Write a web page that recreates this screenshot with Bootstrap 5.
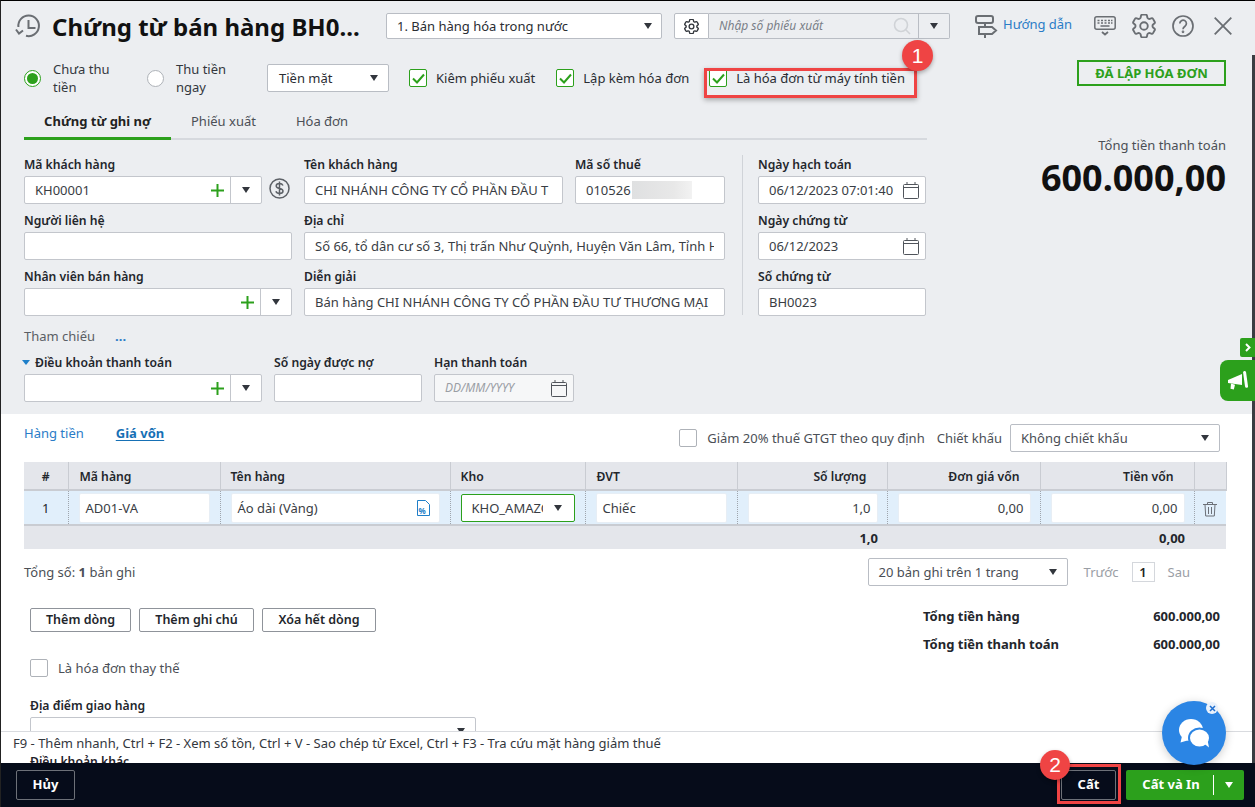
<!DOCTYPE html>
<html lang="vi">
<head>
<meta charset="utf-8">
<title>Chứng từ bán hàng</title>
<link href="https://cdn.jsdelivr.net/npm/bootstrap@5.3.0/dist/css/bootstrap.min.css" rel="stylesheet">
<style>
html,body{margin:0;height:100%;overflow:hidden;background:#fff}
body{font-family:"Noto Sans","Liberation Sans",sans-serif;font-size:13px;color:#1f2229;line-height:18px}
.shell{width:1255px;height:807px;position:relative;overflow:hidden;border-top:1px solid #000;border-left:1px solid #222;display:flex;flex-direction:column}
.scrollstrip{position:absolute;right:0;top:54px;bottom:44px;width:3px;background:#3a3d42}
.scrolltop{position:absolute;right:0;top:0;height:54px;width:3px;background:#eceef1}
.scrollarea{flex:1 1 auto;min-height:0;overflow:hidden;position:relative}
.graypane{background:#eceef1;height:413px;padding:0 0 0 23px}
.headrow{height:50px;display:flex;align-items:center;margin-left:-9px}
.doc-title{font-size:24px;font-weight:700;color:#111;line-height:30px;margin:2px 0 0 11px;width:334px;white-space:nowrap}
.boxsel{background:#fff;border:1px solid #b9bdc4;border-radius:2px;height:26px;display:flex;align-items:center;padding:0 10px;white-space:nowrap;color:#2a2d33}
.caretdown{width:0;height:0;border-left:4.5px solid transparent;border-right:4.5px solid transparent;border-top:6px solid #32363d;flex:none;display:inline-block}
.wtype{width:276px;justify-content:space-between;padding-right:9px;margin-left:0}
.gearbtn{width:35px;margin-left:12px;border-radius:2px 0 0 2px;justify-content:center;padding:0}
.searchbox{width:241px;background:#eceef1;border-left:0;border-radius:0 2px 2px 0;padding:0;color:#7a7f88;font-style:italic;font-size:12px}
.searchbox .stext{flex:1;padding-left:10px}
.searchbox .sdrop{width:31px;height:100%;border-left:1px solid #b9bdc4;display:flex;align-items:center;justify-content:center;font-style:normal}
.guide{color:#2a7cc7;margin-left:25px;margin-right:22px;display:flex;align-items:center;gap:3px;white-space:nowrap}
.guide span{margin-top:-5px}
.ticons{display:flex;align-items:center;gap:16px}
.mainsplit{display:flex}
.leftcol{width:903px}
.rightcol{flex:1;padding-right:29px;display:flex;flex-direction:column;align-items:flex-end}
.optrow{height:46px;margin-top:4px;display:flex;align-items:center;position:relative}
.radio-dot{width:17px;height:17px;border-radius:50%;background:#fff;border:1px solid #aeb2b8;flex:none;display:flex;align-items:center;justify-content:center}
.radio-dot.on{border-color:#2ca01c}
.radio-dot.on::after{content:"";width:11px;height:11px;border-radius:50%;background:#2ca01c}
.radio-lab{line-height:18px;margin-left:12px;color:#33373d}
.tick{width:18px;height:18px;border:1px solid #2ca01c;border-radius:2px;background:#fff;flex:none;display:flex;align-items:center;justify-content:center}
.blank-tick{width:18px;height:18px;border:1px solid #aeb2b8;border-radius:2px;background:#fff;flex:none}
.chk{display:flex;align-items:center;gap:9px;white-space:nowrap;color:#2a2d33}
.pay{width:122px;height:28px;justify-content:space-between;margin-left:28px;padding:0 10px 0 11px}
.tabsline{height:35px;margin-top:4px;border-bottom:2px solid #d6d9de;display:flex;width:903px}
.tabi{height:35px;padding:0 20px 4px;display:flex;align-items:center;color:#4b4f56;white-space:nowrap}
.tabi.act{font-weight:700;color:#222;border-bottom:3px solid #2ca01c;width:147px;justify-content:center;padding:0 0 1px}
.formgrid{display:flex;margin-top:15px}
.fcol{display:flex;flex-direction:column}
.lab{font-weight:600;font-size:12.2px;color:#23262c;line-height:20px;height:18px;margin-bottom:3px;white-space:nowrap}
.fld{height:28px;margin-bottom:7px;background:#fff;border:1px solid #c3c6cc;border-radius:2px;padding:0 10px;display:flex;align-items:center;white-space:nowrap;overflow:hidden;color:#393d44;font-size:13px;line-height:18px}
.fld .clipt{overflow:hidden;flex:1}
.comb{padding:0 0 0 10px}
.comb .clipt{flex:1}
.comb .plus{color:#2ca01c;width:20px;display:flex;justify-content:center}
.comb .dd{width:31px;height:100%;border-left:1px solid #c3c6cc;margin-left:3px;display:flex;align-items:center;justify-content:center}
.datef{padding:0 6px 0 10px;justify-content:space-between}
.refrow{height:20px;margin-top:3px;color:#5a5e65;display:flex;align-items:center;gap:20px}
.refrow a{color:#2a7cc7;font-weight:700;text-decoration:none;line-height:12px}
.payrow{display:flex;gap:12px;margin-top:8px}
.payrow .lab{margin-bottom:2px;line-height:18px}
.blurval{width:60px;height:18px;background:linear-gradient(90deg,#dfe0e1,#e8e8e8 70%,#f2f2f2);margin-left:1px;flex:none}
.invstate{width:149px;height:26px;border:2px solid #2ca01c;color:#2ca01c;font-weight:700;display:flex;align-items:center;justify-content:center;margin-top:9px;white-space:nowrap}
.totlab{margin-top:50px;color:#4b4f56;white-space:nowrap}
.totval{font-size:36px;font-weight:700;line-height:44px;color:#111;margin-top:2px;white-space:nowrap}
.whitepane{background:#fff;padding:0 29px 0 23px}
.gridtop{height:48px;display:flex;align-items:center}
.gridlinks{margin-top:-10px;display:flex}
.gridtop .lnk{color:#2a7cc7;margin-right:32px;white-space:nowrap}
.gridtop .lnkon{color:#1670b5;font-weight:700;text-decoration:underline;white-space:nowrap;text-underline-offset:2px}
.discount{margin-left:auto;display:flex;align-items:center;color:#4b4f56;white-space:nowrap}
.discsel{width:210px;height:28px;justify-content:space-between;margin-left:8px;color:#4a4e55;margin-right:6px}
.gridtbl{table-layout:fixed;width:1202px;margin:0;border-collapse:collapse;font-size:13px;--bs-table-bg:transparent}
.gridtbl th{background:#e4e6eb;height:28px;padding:2px 10px 0;font-size:12.2px;font-weight:600;color:#23262c;border:0;border-right:1px solid #c9ccd2;border-bottom:2px solid #c9ccd2;vertical-align:middle;line-height:18px}
.gridtbl th.taR{padding-right:20px}
.gridtbl td{background:#e1effb;height:35px;padding:0 10px;vertical-align:middle;border:0;border-right:1px dotted #9fa5ad;border-bottom:2px solid #c9ccd2}
.gridtbl td.numc{padding-right:9px}
.gridtbl .sumr td{background:#e4e6eb;height:24px;border:0;font-weight:700;padding:0 7px;color:#23262c}
.gridtbl .fld{margin:0;height:30px;border:1px solid #e7eef5;padding:0 6px}
.gridtbl .fld.kho{border-color:#2ca01c;height:28px;padding:0 12px 0 10px;justify-content:space-between}
.taR{text-align:right}
.pgrow{display:flex;align-items:center;height:46px;justify-content:space-between;padding-right:36px;color:#4b4f56}
.pgsel{width:200px;height:28px;justify-content:space-between;color:#4a4e55}
.pgnav{display:flex;align-items:center;color:#9a9ea5;gap:13px;margin-left:16px}
.pgnum{width:23px;height:20px;background:#fff;border:1px solid #d4d7dc;color:#222;font-weight:600;display:flex;align-items:center;justify-content:center}
.btnrow{display:flex;justify-content:space-between;padding-left:6px;margin-top:13px}
.linebtn{border:1px solid #8f939a;border-radius:2px;background:#fff;color:#23262c;font-weight:600;font-size:12.5px;line-height:18px;height:24px;padding:0;display:flex;align-items:center;justify-content:center}
.sumbox{width:303px;padding-right:6px;margin-top:-6px;color:#23262c}
.sumline{display:flex;justify-content:space-between;height:28px;align-items:center;font-weight:700}
.thaythe{display:flex;align-items:center;gap:10px;margin:1px 0 0 6px;color:#4b4f56}
.placelab{margin:19px 0 3px 6px}
.placefld{margin-left:6px;width:446px;height:28px;background:#fff;border:1px solid #c3c6cc;border-radius:2px;margin-bottom:8px;display:flex;align-items:center;justify-content:flex-end;padding-right:10px}
.otherlab{margin-left:6px;font-size:12.2px;font-weight:600}
.hintbar{position:absolute;left:-1px;right:0;top:730px;height:23px;background:#fff;border-top:1px solid #d9dbdf;padding-left:13px;font-size:13px;color:#33373d;line-height:22px;white-space:nowrap}
.footbar{height:44px;background:#060c1a;display:flex;align-items:center;justify-content:space-between;padding:0 11px 0 15px;flex:none}
.ghost{height:30px;border:1px solid #6d7178;border-radius:2px;background:transparent;color:#fff;font-weight:700;font-size:13px;padding:0;display:flex;align-items:center;justify-content:center}
.ghost:hover{color:#fff}
.savegrp{display:flex;align-items:center;gap:10px}
.savegreen{width:118px;height:30px;background:#2ca01c;color:#fff;font-weight:700;font-size:13px;border:0;border-radius:2px;display:flex;align-items:center;padding:0}
.savegreen .st{width:87px;text-align:center;padding-left:3px}
.savegreen .sp{width:1px;height:20px;background:#fff}
.savegreen .sc{flex:1;display:flex;justify-content:center}
.savegreen .caretdown{border-top-color:#fff}
.redframe{position:absolute;border:3px solid #ef4444;box-shadow:0 2px 5px rgba(0,0,0,.3);pointer-events:none}
.numdot{position:absolute;border-radius:50%;background:#ef4444;color:#fff;display:flex;align-items:center;justify-content:center;font-size:21px;box-shadow:0 2px 4px rgba(0,0,0,.3);font-family:"Liberation Sans",sans-serif}
.chatbub{position:absolute;left:1161px;top:700px;width:64px;height:64px;border-radius:50%;background:#2b85e4;display:flex;align-items:center;justify-content:center;box-shadow:0 2px 10px rgba(0,0,0,.2)}
.chatx{position:absolute;left:1205px;top:701px;width:12px;height:12px;border-radius:50%;background:#e9f1fb;display:flex;align-items:center;justify-content:center}
.sidetag{position:absolute;left:1239px;top:337px;width:15px;height:19px;background:#2ca01c;border-radius:2px 0 0 2px;display:flex;align-items:center;justify-content:center}
.sidemega{position:absolute;left:1219px;top:359px;width:36px;height:41px;background:#2ca01c;border-radius:8px 0 0 8px;display:flex;align-items:center;justify-content:center}
</style>
</head>
<body>
<div class="shell">
  <div class="scrollarea">
    <div class="graypane">
      <div class="headrow">
        <svg width="26" height="26" viewBox="0 0 26 26" fill="none" stroke="#6a6e73" stroke-width="2" style="flex:none"><path d="M11 22.800A10.300 10.300 0 1 0 3.400 14"/><path d="M13.500 7v8h7"/><path d="M1 16.500l3 4 4-3"/></svg>
        <h1 class="doc-title">Chứng từ bán hàng BH0...</h1>
        <div class="boxsel wtype"><span>1. Bán hàng hóa trong nước</span><i class="caretdown"></i></div>
        <div class="boxsel gearbtn"><svg width="15" height="15" viewBox="2.500 2.500 19 19" fill="none" stroke="#33373d" stroke-width="1.700"><path d="M9.594 3.940c.09-.542.56-.94 1.110-.94h2.593c.55 0 1.020.398 1.110.94l.213 1.281c.063.374.313.686.645.870.074.040.147.083.220.127.325.196.720.257 1.075.124l1.217-.456a1.125 1.125 0 0 1 1.370.490l1.296 2.247a1.125 1.125 0 0 1-.260 1.431l-1.003.827c-.293.241-.438.613-.430.992a7.723 7.723 0 0 1 0 .255c-.008.378.137.750.430.991l1.004.827c.424.350.534.955.260 1.430l-1.298 2.247a1.125 1.125 0 0 1-1.369.491l-1.217-.456c-.355-.133-.750-.072-1.076.124a6.470 6.470 0 0 1-.220.128c-.331.183-.581.495-.644.869l-.213 1.281c-.09.543-.56.940-1.110.940h-2.594c-.55 0-1.019-.398-1.110-.940l-.213-1.281c-.062-.374-.312-.686-.644-.870a6.520 6.520 0 0 1-.220-.127c-.325-.196-.720-.257-1.076-.124l-1.217.456a1.125 1.125 0 0 1-1.369-.490l-1.297-2.247a1.125 1.125 0 0 1 .260-1.431l1.004-.827c.292-.240.437-.613.430-.991a6.932 6.932 0 0 1 0-.255c.007-.380-.138-.751-.430-.992l-1.004-.827a1.125 1.125 0 0 1-.260-1.430l1.297-2.247a1.125 1.125 0 0 1 1.370-.491l1.216.456c.356.133.751.072 1.076-.124.072-.044.146-.086.220-.128.332-.183.582-.495.644-.869l.214-1.280Z"/><circle cx="12" cy="12" r="3"/></svg></div>
        <div class="boxsel searchbox"><span class="stext">Nhập số phiếu xuất</span><svg width="20" height="20" viewBox="0 0 20 20" fill="none" stroke="#d0d3d7" stroke-width="1.6" style="margin-right:6px"><circle cx="9" cy="9" r="6.5"/><path d="M14 14l4 4"/></svg><span class="sdrop"><i class="caretdown"></i></span></div>
        <div class="guide">
          <svg width="25" height="25" viewBox="0 0 25 25" fill="none" stroke="#6a6e73" stroke-width="2"><rect x="1" y="2" width="17" height="7" rx="2"/><path d="M4 13h13l4 3.500-4 3.500H4zM10 9v4M10 20v4"/></svg>
          <span>Hướng dẫn</span>
        </div>
        <div class="ticons">
          <svg width="22" height="20" viewBox="0 0 22 20" fill="none" stroke="#6a6e73" stroke-width="1.500"><rect x=".8" y=".8" width="20.400" height="12.400" rx="2"/><path d="M3.500 4.500h2M7 4.500h2M10.500 4.500h2M14 4.500h2M17 4.500h1.500M3.500 7h2M7 7h2M10.500 7h2M14 7h2M17 7h1.500M6.500 10h9"/><path d="M8 16l3 2.500 3-2.500" stroke-width="1.800"/></svg>
          <svg width="24" height="24" viewBox="2.500 2.500 19 19" fill="none" stroke="#6a6e73" stroke-width="1.500"><path d="M9.594 3.940c.09-.542.56-.94 1.110-.94h2.593c.55 0 1.020.398 1.110.94l.213 1.281c.063.374.313.686.645.870.074.040.147.083.220.127.325.196.720.257 1.075.124l1.217-.456a1.125 1.125 0 0 1 1.370.490l1.296 2.247a1.125 1.125 0 0 1-.260 1.431l-1.003.827c-.293.241-.438.613-.430.992a7.723 7.723 0 0 1 0 .255c-.008.378.137.750.430.991l1.004.827c.424.350.534.955.260 1.430l-1.298 2.247a1.125 1.125 0 0 1-1.369.491l-1.217-.456c-.355-.133-.750-.072-1.076.124a6.470 6.470 0 0 1-.220.128c-.331.183-.581.495-.644.869l-.213 1.281c-.09.543-.56.940-1.110.940h-2.594c-.55 0-1.019-.398-1.110-.940l-.213-1.281c-.062-.374-.312-.686-.644-.870a6.520 6.520 0 0 1-.220-.127c-.325-.196-.720-.257-1.076-.124l-1.217.456a1.125 1.125 0 0 1-1.369-.490l-1.297-2.247a1.125 1.125 0 0 1 .260-1.431l1.004-.827c.292-.240.437-.613.430-.991a6.932 6.932 0 0 1 0-.255c.007-.380-.138-.751-.430-.992l-1.004-.827a1.125 1.125 0 0 1-.260-1.430l1.297-2.247a1.125 1.125 0 0 1 1.370-.491l1.216.456c.356.133.751.072 1.076-.124.072-.044.146-.086.220-.128.332-.183.582-.495.644-.869l.214-1.280Z"/><circle cx="12" cy="12" r="3"/></svg>
          <svg width="22" height="22" viewBox="0 0 22 22" fill="none" stroke="#6a6e73" stroke-width="1.700"><circle cx="11" cy="11" r="10"/><path d="M7.800 8.500a3.300 3.300 0 1 1 5.200 2.700c-1.300.9-2 1.500-2 3"/><circle cx="11" cy="16.800" r=".5"/></svg>
          <svg width="18" height="18" viewBox="0 0 18 18" stroke="#6a6e73" stroke-width="1.800" style="margin-left:4px"><path d="M.7.700l16.600 16.600M17.300.7L.7 17.300"/></svg>
        </div>
      </div>
      <div class="mainsplit">
        <div class="leftcol">
          <div class="optrow">
            <div class="radio-dot on"></div><div class="radio-lab" style="width:63px">Chưa thu tiền</div>
            <div class="radio-dot" style="margin-left:31px"></div><div class="radio-lab" style="width:63px">Thu tiền ngay</div>
            <div class="boxsel pay"><span>Tiền mặt</span><i class="caretdown"></i></div>
            <div class="chk" style="margin-left:20px"><span class="tick"><svg width="13" height="11" viewBox="0 0 13 11" fill="none" stroke="#2ca01c" stroke-width="2"><path d="M1 5.500l4 4 7-8"/></svg></span><span>Kiêm phiếu xuất</span></div>
            <div class="chk" style="margin-left:21px"><span class="tick"><svg width="13" height="11" viewBox="0 0 13 11" fill="none" stroke="#2ca01c" stroke-width="2"><path d="M1 5.500l4 4 7-8"/></svg></span><span>Lập kèm hóa đơn</span></div>
            <div class="chk" style="margin-left:20px"><span class="tick"><svg width="13" height="11" viewBox="0 0 13 11" fill="none" stroke="#2ca01c" stroke-width="2"><path d="M1 5.500l4 4 7-8"/></svg></span><span>Là hóa đơn từ máy tính tiền</span></div>
          </div>
          <div class="tabsline">
            <div class="tabi act">Chứng từ ghi nợ</div>
            <div class="tabi">Phiếu xuất</div>
            <div class="tabi">Hóa đơn</div>
          </div>
          <div class="formgrid">
            <div class="fcol" style="width:268px">
              <div class="lab">Mã khách hàng</div>
              <div class="d-flex align-items-start" style="gap:7px"><div class="fld comb" style="width:238px"><span class="clipt">KH00001</span><span class="plus"><svg width="13" height="13" viewBox="0 0 13 13" stroke="#2ca01c" stroke-width="2"><path d="M6.500 0v13M0 6.500h13"/></svg></span><span class="dd"><i class="caretdown"></i></span></div>
              <svg width="21" height="21" viewBox="0 0 21 21" fill="none" stroke="#5d6167" stroke-width="1.500" style="margin-top:2px;flex:none"><circle cx="10.500" cy="10.500" r="9.500"/><path d="M14 7.500c-.6-1.300-1.800-2-3.500-2-2 0-3.300 1-3.300 2.500 0 3.500 6.800 1.600 6.800 5 0 1.500-1.400 2.500-3.500 2.500-1.800 0-3.100-.8-3.600-2.200M10.500 3.500v14"/></svg></div>
              <div class="lab">Người liên hệ</div>
              <div class="fld"></div>
              <div class="lab">Nhân viên bán hàng</div>
              <div class="fld comb"><span class="clipt"></span><span class="plus"><svg width="13" height="13" viewBox="0 0 13 13" stroke="#2ca01c" stroke-width="2"><path d="M6.500 0v13M0 6.500h13"/></svg></span><span class="dd"><i class="caretdown"></i></span></div>
            </div>
            <div class="fcol" style="width:421px;margin-left:12px">
              <div class="d-flex" style="gap:12px">
                <div style="width:259px"><div class="lab">Tên khách hàng</div><div class="fld"><span class="clipt">CHI NHÁNH CÔNG TY CỔ PHẦN ĐẦU T</span></div></div>
                <div style="width:150px"><div class="lab">Mã số thuế</div><div class="fld"><span>010526</span><span class="blurval"></span></div></div>
              </div>
              <div class="lab">Địa chỉ</div>
              <div class="fld"><span class="clipt">Số 66, tổ dân cư số 3, Thị trấn Như Quỳnh, Huyện Văn Lâm, Tỉnh H</span></div>
              <div class="lab">Diễn giải</div>
              <div class="fld"><span class="clipt">Bán hàng CHI NHÁNH CÔNG TY CỔ PHẦN ĐẦU TƯ THƯƠNG MẠI</span></div>
            </div>
            <div style="width:1px;background:#d0d3d8;margin:0 15px 0 17px;height:160px"></div>
            <div class="fcol" style="width:168px">
              <div class="lab">Ngày hạch toán</div>
              <div class="fld datef"><span>06/12/2023 07:01:40</span><svg width="16" height="17" viewBox="0 0 16 17" fill="none" stroke="#50545b" stroke-width="1"><rect x=".5" y="2.500" width="15" height="14" rx="1"/><path d="M.5 5.500h15M4 0v3M12 0v3"/></svg></div>
              <div class="lab">Ngày chứng từ</div>
              <div class="fld datef"><span>06/12/2023</span><svg width="16" height="17" viewBox="0 0 16 17" fill="none" stroke="#50545b" stroke-width="1"><rect x=".5" y="2.500" width="15" height="14" rx="1"/><path d="M.5 5.500h15M4 0v3M12 0v3"/></svg></div>
              <div class="lab">Số chứng từ</div>
              <div class="fld"><span>BH0023</span></div>
            </div>
          </div>
          <div class="refrow"><span>Tham chiếu</span><a href="#">...</a></div>
          <div class="payrow">
            <div style="width:238px">
              <div class="lab"><svg width="8" height="5" viewBox="0 0 8 5" style="margin:0 5px 2px -2px"><path d="M0 0h8L4 5z" fill="#1e7fc9"/></svg>Điều khoản thanh toán</div>
              <div class="fld comb"><span class="clipt"></span><span class="plus"><svg width="13" height="13" viewBox="0 0 13 13" stroke="#2ca01c" stroke-width="2"><path d="M6.500 0v13M0 6.500h13"/></svg></span><span class="dd"><i class="caretdown"></i></span></div>
            </div>
            <div style="width:148px"><div class="lab">Số ngày được nợ</div><div class="fld"></div></div>
            <div style="width:140px"><div class="lab">Hạn thanh toán</div><div class="fld datef" style="background:#f6f7f8;color:#9a9ea5;font-style:italic;font-size:12px"><span>DD/MM/YYYY</span><svg width="16" height="17" viewBox="0 0 16 17" fill="none" stroke="#50545b" stroke-width="1"><rect x=".5" y="2.500" width="15" height="14" rx="1"/><path d="M.5 5.500h15M4 0v3M12 0v3"/></svg></div></div>
          </div>
        </div>
        <div class="rightcol">
          <div class="invstate">ĐÃ LẬP HÓA ĐƠN</div>
          <div class="totlab">Tổng tiền thanh toán</div>
          <div class="totval">600.000,00</div>
        </div>
      </div>
    </div>
    <div class="whitepane">
      <div class="gridtop">
        <div class="gridlinks"><span class="lnk">Hàng tiền</span><span class="lnkon">Giá vốn</span></div>
        <div class="discount">
          <span class="blank-tick" style="margin-right:10px"></span><span>Giảm 20% thuế GTGT theo quy định</span><span style="margin-left:12px">Chiết khấu</span>
          <div class="boxsel discsel"><span>Không chiết khấu</span><i class="caretdown"></i></div>
        </div>
      </div>
      <table class="table gridtbl">
        <colgroup><col style="width:44px"><col style="width:152px"><col style="width:230px"><col style="width:135px"><col style="width:152px"><col style="width:150px"><col style="width:153px"><col style="width:154px"><col style="width:32px"></colgroup>
        <thead><tr><th class="text-center">#</th><th style="padding-left:11px">Mã hàng</th><th>Tên hàng</th><th>Kho</th><th style="padding-left:11px">ĐVT</th><th class="taR">Số lượng</th><th class="taR">Đơn giá vốn</th><th class="taR">Tiền vốn</th><th></th></tr></thead>
        <tbody>
          <tr>
            <td class="text-center" style="padding:0">1</td>
            <td><div class="fld">AD01-VA</div></td>
            <td><div class="fld justify-content-between"><span>Áo dài (Vàng)</span><svg width="13" height="16" viewBox="0 0 13 16" fill="none" stroke="#1e7fc9" style="margin-right:3px"><path d="M.5.500h8l4 4v11H.5z"/><text x="1.500" y="13.500" font-size="8" font-weight="700" fill="#1e7fc9" stroke="none" font-family="Noto Sans">%</text></svg></div></td>
            <td><div class="fld kho"><span style="overflow:hidden;width:71px">KHO_AMAZON</span><i class="caretdown"></i></div></td>
            <td><div class="fld">Chiếc</div></td>
            <td class="numc"><div class="fld justify-content-end">1,0</div></td>
            <td class="numc"><div class="fld justify-content-end">0,00</div></td>
            <td class="numc"><div class="fld justify-content-end">0,00</div></td>
            <td class="text-center" style="padding:0;border-right:0"><svg width="14" height="16" viewBox="0 0 14 16" fill="none" stroke="#6c7077"><path d="M0 3.500h14M4.500 3.500V1.500h5v2M2 3.500l.7 11.500h8.600L12 3.500M5.500 6v7M8.500 6v7"/></svg></td>
          </tr>
          <tr class="sumr"><td colspan="5"></td><td class="taR" style="padding-right:9px">1,0</td><td></td><td class="taR" style="padding-right:9px">0,00</td><td></td></tr>
        </tbody>
      </table>
      <div class="pgrow">
        <div>Tổng số: <b>1</b> bản ghi</div>
        <div class="d-flex align-items-center">
          <div class="boxsel pgsel"><span>20 bản ghi trên 1 trang</span><i class="caretdown"></i></div>
          <div class="pgnav"><span>Trước</span><span class="pgnum">1</span><span>Sau</span></div>
        </div>
      </div>
      <div class="btnrow">
        <div class="d-flex" style="gap:8px">
          <button class="btn linebtn" style="width:101px">Thêm dòng</button>
          <button class="btn linebtn" style="width:115px">Thêm ghi chú</button>
          <button class="btn linebtn" style="width:114px">Xóa hết dòng</button>
        </div>
        <div class="sumbox">
          <div class="sumline"><span>Tổng tiền hàng</span><span>600.000,00</span></div>
          <div class="sumline"><span>Tổng tiền thanh toán</span><span>600.000,00</span></div>
        </div>
      </div>
      <div class="thaythe"><span class="blank-tick"></span><span>Là hóa đơn thay thế</span></div>
      <div class="lab placelab">Địa điểm giao hàng</div>
      <div class="placefld"><i class="caretdown"></i></div>
      <div class="otherlab">Điều khoản khác</div>
    </div>
  </div>
  <div class="footbar">
    <button class="btn ghost" style="width:59px">Hủy</button>
    <div class="savegrp">
      <button class="btn ghost" style="width:55px">Cất</button>
      <button class="btn savegreen"><span class="st">Cất và In</span><span class="sp"></span><span class="sc"><i class="caretdown"></i></span></button>
    </div>
  </div>
  <div class="hintbar">F9 - Thêm nhanh, Ctrl + F2 - Xem số tồn, Ctrl + V - Sao chép từ Excel, Ctrl + F3 - Tra cứu mặt hàng giảm thuế</div>
  <div class="scrolltop"></div><div class="scrollstrip"></div>
  <div class="redframe" style="left:703px;top:67px;width:213px;height:30px"></div>
  <div class="numdot" style="left:901px;top:39px;width:31px;height:31px">1</div>
  <div class="redframe" style="left:1056px;top:763px;width:64px;height:40px"></div>
  <div class="numdot" style="left:1039px;top:749px;width:30px;height:30px">2</div>
  <div class="sidetag"><svg width="6" height="9" viewBox="0 0 6 9" fill="none" stroke="#fff" stroke-width="2"><path d="M1 1l3.500 3.500L1 8"/></svg></div>
  <div class="sidemega"><svg width="21" height="20" viewBox="0 0 21 20" fill="#fff"><path d="M0 9l14-6v11L0 12z"/><rect x="16" y="0" width="3" height="17" rx="1.500" transform="rotate(-8 17 8)"/><path d="M3 12.500l4 1.200-1.200 4.800-3.300-.8z"/></svg></div>
  <div class="chatbub"><svg width="32" height="30" viewBox="0 0 32 30"><ellipse cx="13" cy="12" rx="12" ry="11" fill="#fff"/><path d="M4 18L2.500 24.500 11 22z" fill="#fff"/><ellipse cx="21.500" cy="20" rx="10.500" ry="9.500" fill="#fff" stroke="#2b85e4" stroke-width="2"/><path d="M26 25.500l5 4-1.500-7.500z" fill="#fff"/></svg></div>
  <div class="chatx"><svg width="7" height="7" viewBox="0 0 7 7" stroke="#1f6fd0" stroke-width="1.500"><path d="M1 1l5 5M6 1L1 6"/></svg></div>
</div>
<script src="https://cdn.jsdelivr.net/npm/bootstrap@5.3.0/dist/js/bootstrap.bundle.min.js"></script>
</body>
</html>
